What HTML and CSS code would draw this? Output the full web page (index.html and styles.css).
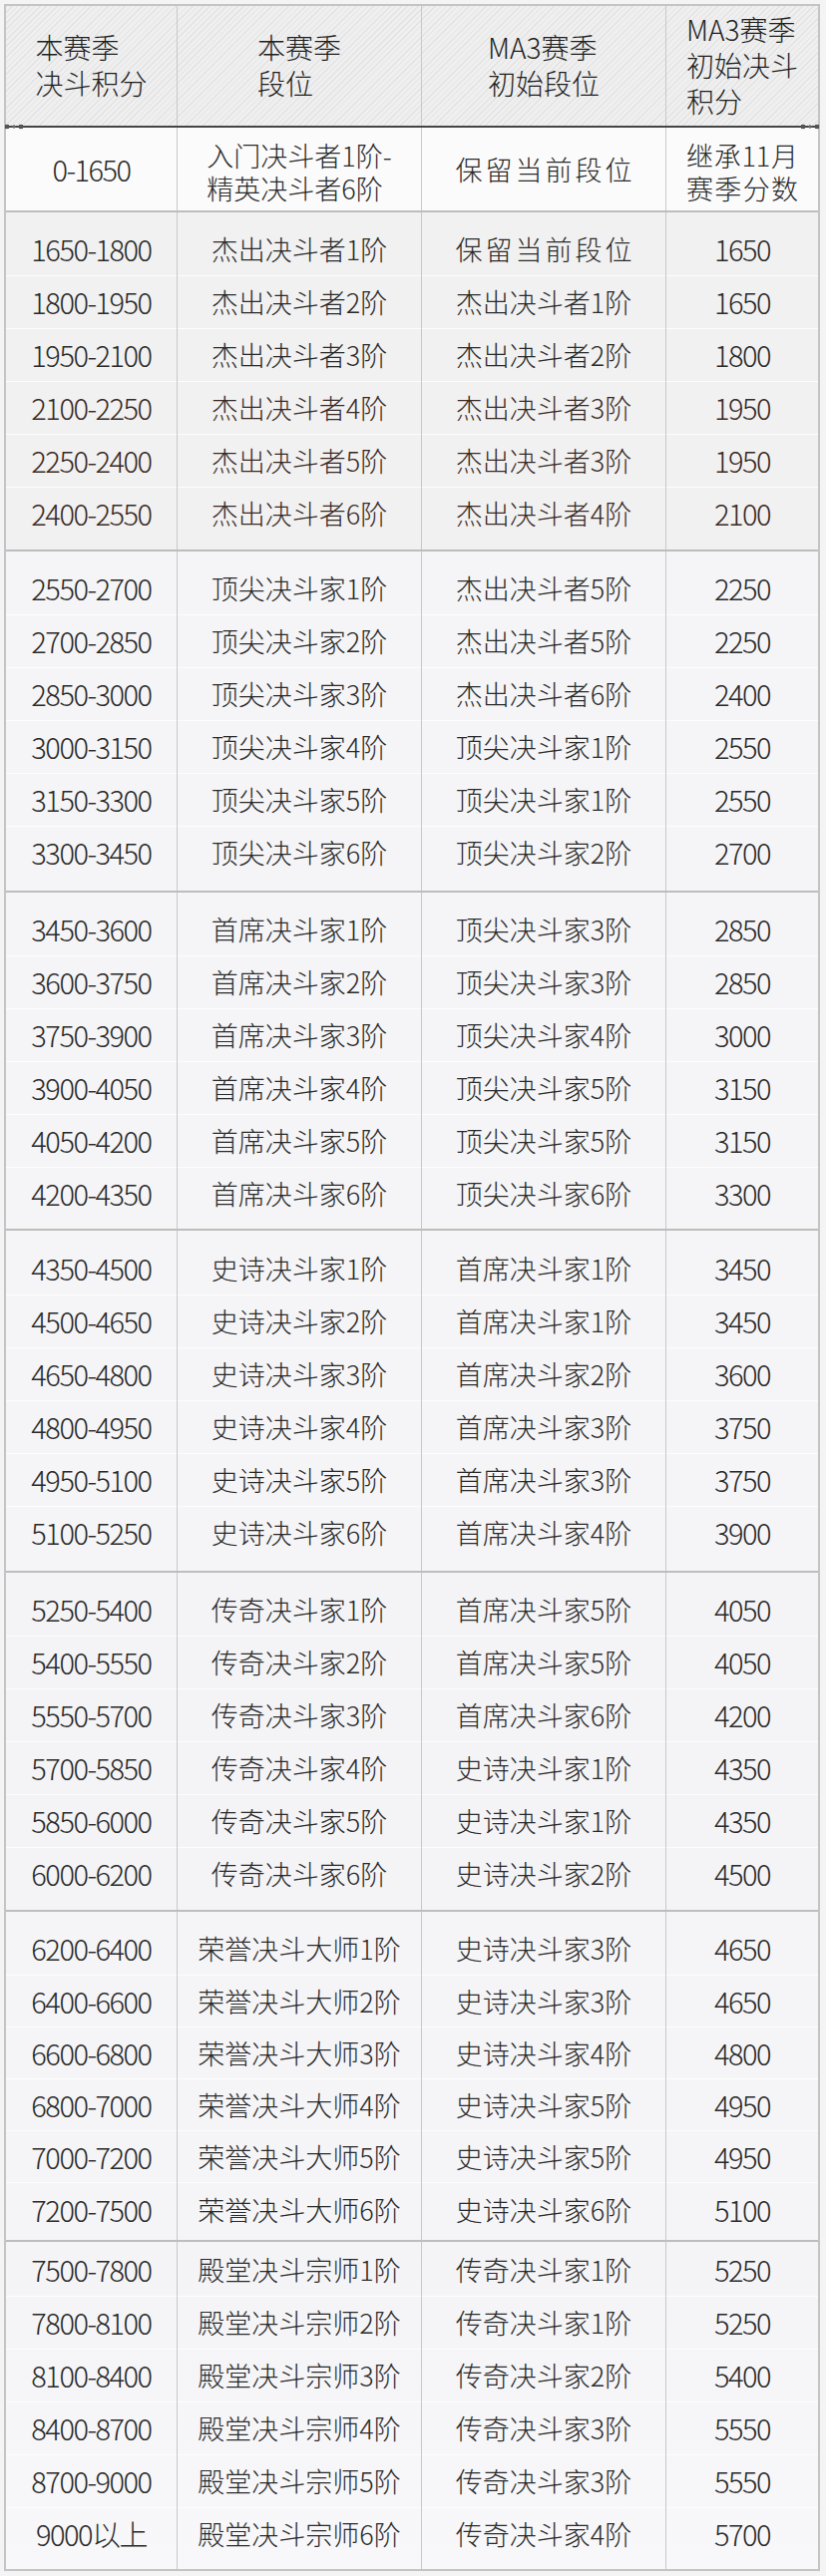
FILE: index.html
```html
<!DOCTYPE html>
<html lang="zh-CN">
<head>
<meta charset="utf-8">
<title>MA3赛季 段位继承表</title>
<link rel="stylesheet" href="styles.css">
</head>
<body>
<div class="sheet">
  <div class="tbl">
    <div class="row head">
      <div class="cell"><span class="stack">本赛季<br>决斗积分</span></div>
      <div class="cell"><span class="stack">本赛季<br>段位</span></div>
      <div class="cell"><span class="stack">MA3赛季<br>初始段位</span></div>
      <div class="cell"><span class="stack">MA3赛季<br>初始决斗<br>积分</span></div>
    </div>
    <div class="row zero">
      <div class="cell num">0-1650</div>
      <div class="cell"><span class="stack two">入门决斗者1阶-<br>精英决斗者6阶</span></div>
      <div class="cell spaced">保留当前段位</div>
      <div class="cell"><span class="stack two just"><span class="jl">继承11月</span><br><span class="jl">赛季分数</span></span></div>
    </div>

    <div class="group g1">
      <div class="row first"><div class="cell num">1650-1800</div><div class="cell">杰出决斗者1阶</div><div class="cell spaced">保留当前段位</div><div class="cell num">1650</div></div>
      <div class="row"><div class="cell num">1800-1950</div><div class="cell">杰出决斗者2阶</div><div class="cell">杰出决斗者1阶</div><div class="cell num">1650</div></div>
      <div class="row"><div class="cell num">1950-2100</div><div class="cell">杰出决斗者3阶</div><div class="cell">杰出决斗者2阶</div><div class="cell num">1800</div></div>
      <div class="row brown"><div class="cell num">2100-2250</div><div class="cell">杰出决斗者4阶</div><div class="cell">杰出决斗者3阶</div><div class="cell num">1950</div></div>
      <div class="row brown"><div class="cell num">2250-2400</div><div class="cell">杰出决斗者5阶</div><div class="cell">杰出决斗者3阶</div><div class="cell num">1950</div></div>
      <div class="row brown last"><div class="cell num">2400-2550</div><div class="cell">杰出决斗者6阶</div><div class="cell">杰出决斗者4阶</div><div class="cell num">2100</div></div>
    </div>

    <div class="group g2">
      <div class="row first"><div class="cell num">2550-2700</div><div class="cell">顶尖决斗家1阶</div><div class="cell">杰出决斗者5阶</div><div class="cell num">2250</div></div>
      <div class="row"><div class="cell num">2700-2850</div><div class="cell">顶尖决斗家2阶</div><div class="cell">杰出决斗者5阶</div><div class="cell num">2250</div></div>
      <div class="row"><div class="cell num">2850-3000</div><div class="cell">顶尖决斗家3阶</div><div class="cell">杰出决斗者6阶</div><div class="cell num">2400</div></div>
      <div class="row"><div class="cell num">3000-3150</div><div class="cell">顶尖决斗家4阶</div><div class="cell">顶尖决斗家1阶</div><div class="cell num">2550</div></div>
      <div class="row"><div class="cell num">3150-3300</div><div class="cell">顶尖决斗家5阶</div><div class="cell">顶尖决斗家1阶</div><div class="cell num">2550</div></div>
      <div class="row last"><div class="cell num">3300-3450</div><div class="cell">顶尖决斗家6阶</div><div class="cell">顶尖决斗家2阶</div><div class="cell num">2700</div></div>
    </div>

    <div class="group g3">
      <div class="row first"><div class="cell num">3450-3600</div><div class="cell">首席决斗家1阶</div><div class="cell">顶尖决斗家3阶</div><div class="cell num">2850</div></div>
      <div class="row"><div class="cell num">3600-3750</div><div class="cell">首席决斗家2阶</div><div class="cell">顶尖决斗家3阶</div><div class="cell num">2850</div></div>
      <div class="row"><div class="cell num">3750-3900</div><div class="cell">首席决斗家3阶</div><div class="cell">顶尖决斗家4阶</div><div class="cell num">3000</div></div>
      <div class="row"><div class="cell num">3900-4050</div><div class="cell">首席决斗家4阶</div><div class="cell">顶尖决斗家5阶</div><div class="cell num">3150</div></div>
      <div class="row"><div class="cell num">4050-4200</div><div class="cell">首席决斗家5阶</div><div class="cell">顶尖决斗家5阶</div><div class="cell num">3150</div></div>
      <div class="row last"><div class="cell num">4200-4350</div><div class="cell">首席决斗家6阶</div><div class="cell">顶尖决斗家6阶</div><div class="cell num">3300</div></div>
    </div>

    <div class="group g4">
      <div class="row first"><div class="cell num">4350-4500</div><div class="cell">史诗决斗家1阶</div><div class="cell">首席决斗家1阶</div><div class="cell num">3450</div></div>
      <div class="row"><div class="cell num">4500-4650</div><div class="cell">史诗决斗家2阶</div><div class="cell">首席决斗家1阶</div><div class="cell num">3450</div></div>
      <div class="row"><div class="cell num">4650-4800</div><div class="cell">史诗决斗家3阶</div><div class="cell">首席决斗家2阶</div><div class="cell num">3600</div></div>
      <div class="row"><div class="cell num">4800-4950</div><div class="cell">史诗决斗家4阶</div><div class="cell">首席决斗家3阶</div><div class="cell num">3750</div></div>
      <div class="row"><div class="cell num">4950-5100</div><div class="cell">史诗决斗家5阶</div><div class="cell">首席决斗家3阶</div><div class="cell num">3750</div></div>
      <div class="row last"><div class="cell num">5100-5250</div><div class="cell">史诗决斗家6阶</div><div class="cell">首席决斗家4阶</div><div class="cell num">3900</div></div>
    </div>

    <div class="group g5">
      <div class="row first"><div class="cell num">5250-5400</div><div class="cell">传奇决斗家1阶</div><div class="cell">首席决斗家5阶</div><div class="cell num">4050</div></div>
      <div class="row"><div class="cell num">5400-5550</div><div class="cell">传奇决斗家2阶</div><div class="cell">首席决斗家5阶</div><div class="cell num">4050</div></div>
      <div class="row"><div class="cell num">5550-5700</div><div class="cell">传奇决斗家3阶</div><div class="cell">首席决斗家6阶</div><div class="cell num">4200</div></div>
      <div class="row"><div class="cell num">5700-5850</div><div class="cell">传奇决斗家4阶</div><div class="cell">史诗决斗家1阶</div><div class="cell num">4350</div></div>
      <div class="row"><div class="cell num">5850-6000</div><div class="cell">传奇决斗家5阶</div><div class="cell">史诗决斗家1阶</div><div class="cell num">4350</div></div>
      <div class="row last"><div class="cell num">6000-6200</div><div class="cell">传奇决斗家6阶</div><div class="cell">史诗决斗家2阶</div><div class="cell num">4500</div></div>
    </div>

    <div class="group g6">
      <div class="row first"><div class="cell num">6200-6400</div><div class="cell">荣誉决斗大师1阶</div><div class="cell">史诗决斗家3阶</div><div class="cell num">4650</div></div>
      <div class="row"><div class="cell num">6400-6600</div><div class="cell">荣誉决斗大师2阶</div><div class="cell">史诗决斗家3阶</div><div class="cell num">4650</div></div>
      <div class="row"><div class="cell num">6600-6800</div><div class="cell">荣誉决斗大师3阶</div><div class="cell">史诗决斗家4阶</div><div class="cell num">4800</div></div>
      <div class="row"><div class="cell num">6800-7000</div><div class="cell">荣誉决斗大师4阶</div><div class="cell">史诗决斗家5阶</div><div class="cell num">4950</div></div>
      <div class="row"><div class="cell num">7000-7200</div><div class="cell">荣誉决斗大师5阶</div><div class="cell">史诗决斗家5阶</div><div class="cell num">4950</div></div>
      <div class="row last"><div class="cell num">7200-7500</div><div class="cell">荣誉决斗大师6阶</div><div class="cell">史诗决斗家6阶</div><div class="cell num">5100</div></div>
    </div>

    <div class="group g7">
      <div class="row first"><div class="cell num">7500-7800</div><div class="cell">殿堂决斗宗师1阶</div><div class="cell">传奇决斗家1阶</div><div class="cell num">5250</div></div>
      <div class="row"><div class="cell num">7800-8100</div><div class="cell">殿堂决斗宗师2阶</div><div class="cell">传奇决斗家1阶</div><div class="cell num">5250</div></div>
      <div class="row"><div class="cell num">8100-8400</div><div class="cell">殿堂决斗宗师3阶</div><div class="cell">传奇决斗家2阶</div><div class="cell num">5400</div></div>
      <div class="row"><div class="cell num">8400-8700</div><div class="cell">殿堂决斗宗师4阶</div><div class="cell">传奇决斗家3阶</div><div class="cell num">5550</div></div>
      <div class="row"><div class="cell num">8700-9000</div><div class="cell">殿堂决斗宗师5阶</div><div class="cell">传奇决斗家3阶</div><div class="cell num">5550</div></div>
      <div class="row last"><div class="cell num">9000以上</div><div class="cell">殿堂决斗宗师6阶</div><div class="cell">传奇决斗家4阶</div><div class="cell num">5700</div></div>
    </div>
  </div>
</div>
</body>
</html>
```

FILE: styles.css
```css
* { box-sizing: border-box; }

html, body {
  margin: 0;
  padding: 0;
  background: #f2f2f2;
}

body {
  font-family: "Noto Sans CJK SC", "Noto Sans", sans-serif;
  font-weight: 300;
  color: #2a2a2a;
}

.sheet {
  width: 828px;
  height: 2583px;
  padding: 4px 6px 4px 4px;
  background: #f4f4f4;
}

.tbl {
  width: 818px;
  border: 2px solid #c4c4c4;
  background: #f5f5f7;
}

.row {
  display: grid;
  grid-template-columns: 171px 245px 245px 153px;
  height: 53px;
  font-size: 27px;
  line-height: 1;
}

.cell {
  display: flex;
  align-items: center;
  justify-content: center;
  text-align: center;
  white-space: nowrap;
}

.cell + .cell {
  border-left: 1px solid #c8c8c8;
}

.num {
  font-size: 29px;
  letter-spacing: -1.5px;
}

.spaced {
  letter-spacing: 3px;
  padding-left: 3px;
}

.stack {
  display: inline-block;
  text-align: left;
}

/* header */
.head {
  position: relative;
  height: 122px;
  border-bottom: 2px solid #454545;
  background-color: #ebebeb;
  background-image: repeating-linear-gradient(135deg, #e3e3e3 0 1px, #efefef 1px 4px);
  font-size: 28px;
  color: #1f1f1f;
}

.head .stack {
  line-height: 36px;
  padding-bottom: 2px;
}

.head::before,
.head::after {
  content: "";
  position: absolute;
  bottom: -4px;
  width: 20px;
  height: 6px;
  background-image:
    radial-gradient(circle at 3px 3px, #555 0 2.2px, transparent 2.6px),
    radial-gradient(circle at 10px 3px, #666 0 1.4px, transparent 1.8px),
    radial-gradient(circle at 17px 3px, #555 0 2.2px, transparent 2.6px);
}

.head::before { left: -2px; }
.head::after { right: -2px; }

/* first data row */
.zero {
  height: 83px;
  background: #fbfbfb;
}

.zero .stack.two {
  line-height: 33px;
  padding-top: 4px;
}

.just .jl {
  display: inline-block;
  width: 112px;
  text-align: justify;
  text-align-last: justify;
}

/* groups */
.group {
  border-top: 2px solid #bdbdbd;
  background: #f5f5f7;
}

.group .row + .row {
  background: linear-gradient(#fdfdfd, #fdfdfd) top / 100% 1px no-repeat;
}

.group .row.first { height: 63px; }
.group .row.first .cell { padding-top: 10px; }
.group .row.last { height: 63px; }
.group .row.last .cell { padding-bottom: 10px; }

.g1 { background: #f1f1f1; }
.g1 .row.last { height: 63px; }

.g2 .row.last { height: 65px; }
.g2 .row.last .cell { padding-bottom: 12px; }

.g3 .row.last { height: 62px; }
.g3 .row.last .cell { padding-bottom: 9px; }

.g4 .row.first { height: 64px; }
.g4 .row.first .cell { padding-top: 11px; }
.g4 .row.last { height: 65px; }
.g4 .row.last .cell { padding-bottom: 12px; }

.g5 { background: #f4f4f7; }

.g6 .row { height: 52px; }
.g6 .row.first { height: 63px; }
.g6 .row.last { height: 58px; }
.g6 .row.last .cell { padding-bottom: 4px; }

.g7 { background: linear-gradient(#f4f4f7, #f8f8fa); }
.g7 .row { height: 53px; }
.g7 .row.first { height: 54px; }
.g7 .row.first .cell { padding-top: 0; }
.g7 .row.last { height: 62px; }
.g7 .row.last .cell { padding-bottom: 9px; }

.brown { color: #3a2925; }
```
